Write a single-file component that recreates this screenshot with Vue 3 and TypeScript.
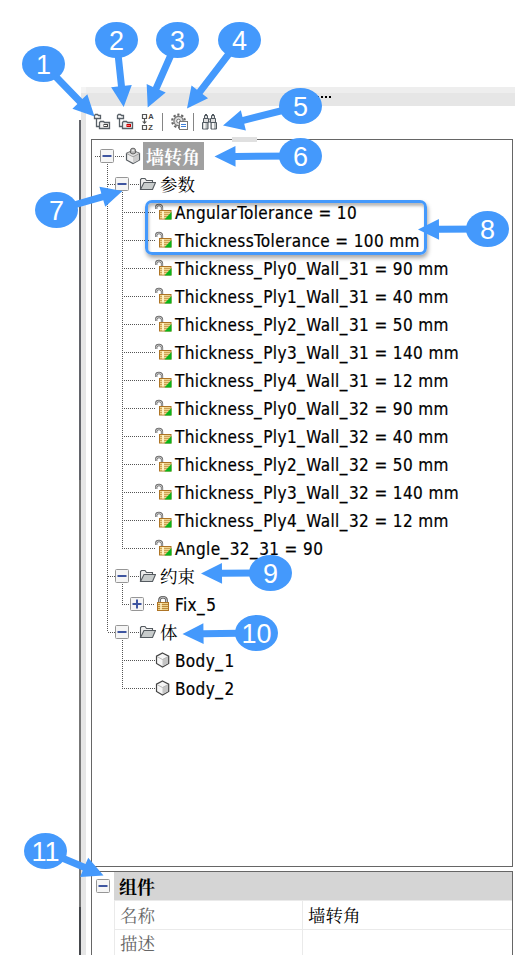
<script setup lang="ts">
type IconKind = 'component' | 'folder' | 'param' | 'lock' | 'body'

interface TreeRow {
  label: string
  depth: 0 | 1 | 2
  icon: IconKind
  box?: 'minus' | 'plus'
  cjk?: boolean
  selected?: boolean
  last?: boolean
  rootTrunk: boolean
}

const params: string[] = [
  'AngularTolerance = 10',
  'ThicknessTolerance = 100 mm',
  'Thickness_Ply0_Wall_31 = 90 mm',
  'Thickness_Ply1_Wall_31 = 40 mm',
  'Thickness_Ply2_Wall_31 = 50 mm',
  'Thickness_Ply3_Wall_31 = 140 mm',
  'Thickness_Ply4_Wall_31 = 12 mm',
  'Thickness_Ply0_Wall_32 = 90 mm',
  'Thickness_Ply1_Wall_32 = 40 mm',
  'Thickness_Ply2_Wall_32 = 50 mm',
  'Thickness_Ply3_Wall_32 = 140 mm',
  'Thickness_Ply4_Wall_32 = 12 mm',
  'Angle_32_31 = 90',
]

const rows: TreeRow[] = [
  { label: '墙转角', depth: 0, icon: 'component', box: 'minus', cjk: true, selected: true, rootTrunk: true },
  { label: '参数', depth: 1, icon: 'folder', box: 'minus', cjk: true, rootTrunk: true },
  ...params.map((label, i): TreeRow => ({
    label, depth: 2, icon: 'param', last: i === params.length - 1, rootTrunk: true,
  })),
  { label: '约束', depth: 1, icon: 'folder', box: 'minus', cjk: true, rootTrunk: true },
  { label: 'Fix_5', depth: 2, icon: 'lock', box: 'plus', last: true, rootTrunk: true },
  { label: '体', depth: 1, icon: 'folder', box: 'minus', cjk: true, last: true, rootTrunk: true },
  { label: 'Body_1', depth: 2, icon: 'body', rootTrunk: false },
  { label: 'Body_2', depth: 2, icon: 'body', last: true, rootTrunk: false },
]

// Splits a name so that its underscores can be spaced on their own.
const pieces = (label: string): string[] => label.split(/(_)/)

const guideWidth = (r: TreeRow): number => (r.depth === 2 ? 63 : 32 + r.depth * 15)
const boxX = (r: TreeRow): number => 8 + r.depth * 15

function guides(r: TreeRow): string {
  const w = guideWidth(r)
  if (r.depth === 0) return `M3 14.5H8M23 14.5H${w}M15.5 22V28`
  const parts: string[] = []
  if (r.rootTrunk) parts.push(r.depth === 1 && r.last ? 'M15.5 0V14' : 'M15.5 0V28')
  if (r.depth === 1) {
    parts.push(`M16 14.5H23M38 14.5H${w}M30.5 22V28`)
  } else {
    parts.push(r.last ? 'M30.5 0V15' : 'M30.5 0V28')
    parts.push(r.box ? `M32 14.5H38M53 14.5H${w}` : `M32 14.5H${w}`)
  }
  return parts.join('')
}

interface Callout { n: number; x: number; y: number; tx: number; ty: number }

const callouts: Callout[] = [
  { n: 1, x: 43.5, y: 64, tx: 94.5, ty: 116.5 },
  { n: 2, x: 116.5, y: 40, tx: 123.7, ty: 107 },
  { n: 3, x: 177.5, y: 40, tx: 147.7, ty: 107.5 },
  { n: 4, x: 239.5, y: 40, tx: 187, ty: 108.5 },
  { n: 5, x: 300.5, y: 106, tx: 223, ty: 125.5 },
  { n: 6, x: 300.5, y: 156, tx: 214.5, ty: 156.5 },
  { n: 7, x: 56.5, y: 210, tx: 122.5, ty: 191 },
  { n: 8, x: 487.5, y: 229, tx: 418, ty: 229.5 },
  { n: 9, x: 270.5, y: 573, tx: 201, ty: 573.5 },
  { n: 10, x: 256.5, y: 633, tx: 182.5, ty: 634 },
  { n: 11, x: 45.5, y: 851, tx: 103.5, ty: 875.5 },
]

function arrow(c: Callout): string {
  const dx = c.tx - c.x
  const dy = c.ty - c.y
  const len = Math.hypot(dx, dy)
  const ux = dx / len
  const uy = dy / len
  const at = (along: number, side: number): string =>
    `${(c.x + ux * along - uy * side).toFixed(2)},${(c.y + uy * along + ux * side).toFixed(2)}`
  const head = len - 21
  return [at(0, 3.5), at(head, 3.5), at(head, 10.4), at(len, 0), at(head, -10.4), at(head, -3.5), at(0, -3.5)].join(' ')
}
</script>

<template>
  <div class="page">
    <div class="dock">
      <div class="rail"><i class="rail-dark"></i><i class="rail-light"></i></div>
      <div class="panel">
        <div class="titlebar"><span class="grip"><i v-for="k in 6" :key="k"></i></span></div>
        <div class="toolbar">
          <svg class="tool" width="18" height="18" viewBox="0 0 18 18">
            <path d="M1.5 5.5V2.5L2.5 1.5H4.5L5.5 2.5H7.5V5.5ZM3.5 6V13.5H7" fill="none" stroke="#586067" stroke-width="1.3" />
            <path d="M6.5 15.5V9.5L7.5 8.5H10.5L11.5 9.5H16.5V15.5Z" fill="#f1f1f1" stroke="#586067" stroke-width="1.3" />
            <rect x="11" y="11.5" width="3.5" height="2" fill="#fff" stroke="#444" />
          </svg>
          <svg class="tool second" width="18" height="18" viewBox="0 0 18 18">
            <path d="M1.5 5.5V2.5L2.5 1.5H4.5L5.5 2.5H7.5V5.5ZM3.5 6V13.5H7" fill="none" stroke="#586067" stroke-width="1.3" />
            <path d="M6.5 15.5V9.5L7.5 8.5H10.5L11.5 9.5H16.5V15.5Z" fill="#f1f1f1" stroke="#586067" stroke-width="1.3" />
            <rect x="11" y="11.5" width="3.5" height="2" fill="#f66" stroke="#c00" />
          </svg>
          <svg class="tool sort" width="13" height="18" viewBox="0 0 13 18">
            <path d="M1.5 1.5h4v4h-4zM1.5 12.5h4v4h-4zM3.5 6v4" fill="none" stroke="#555" stroke-width="1.2" />
            <path d="M1 8.4H6L3.5 11Z" fill="#555" />
            <text x="7.3" y="6.3">A</text><text x="7.3" y="17">Z</text>
          </svg>
          <i class="sep"></i>
          <svg class="tool gear" width="17" height="18" viewBox="0 0 17 18">
            <circle cx="7.5" cy="8" r="6.3" fill="none" stroke="#666" stroke-width="2.2" stroke-dasharray="2.2 1.76" />
            <circle cx="7.5" cy="8" r="4.6" fill="#ddd" stroke="#777" stroke-width="1.2" />
            <circle cx="7.5" cy="8" r="1.8" fill="#fff" stroke="#777" />
            <rect x="8.5" y="8.5" width="8" height="8" fill="#fff" stroke="#777" />
            <path d="M10 11.5h5M10 13.5h5" stroke="#4080d8" />
          </svg>
          <i class="sep after-gear"></i>
          <svg class="tool bino" width="18" height="18" viewBox="0 0 18 18">
            <path d="M3.5 2.5h3v3h-3zM10.5 2.5h3v3h-3zM2.5 5.5h5v4h-5zM9.5 5.5h5v4h-5zM7.5 6h2v3h-2z" fill="#ddd" stroke="#505960" />
            <path d="M1.5 9.5h5.5v6.5h-5.5zM10 9.5h5.5v6.5h-5.5z" fill="#b5b9b9" stroke="#505960" />
            <path d="M3.5 10v5.5M12 10v5.5" stroke="#f8f8f8" stroke-width="2" />
            <path d="M4 1.5h2M11 1.5h2" stroke="#505960" />
          </svg>
        </div>

        <div class="tree">
          <div v-for="(r, i) in rows" :key="i" class="row">
            <svg :width="guideWidth(r)" height="28" class="guide">
              <path :d="guides(r)" class="dots" />
              <g v-if="r.box" :transform="`translate(${boxX(r)} 7)`">
                <rect x="0.5" y="0.5" width="13" height="13" rx="1" class="box" />
                <path :d="r.box === 'plus' ? 'M2.5 7H11.5M7 2.5V11.5' : 'M2.5 7H11.5'" class="sign" />
              </g>
            </svg>
            <svg class="icon" width="17" height="18" viewBox="0 0 17 18">
              <template v-if="r.icon === 'component'">
                <path d="M9 3.5L15.5 6.5V13L9 16.5L2.5 13V6.5Z" fill="#eee" stroke="#555b60" stroke-width="1.2" />
                <path d="M9 9.8L15 6.5V13L9 16.2Z" fill="#ccc" />
                <path d="M2.5 6.5L9 3.5L15.5 6.5L9 9.8Z" fill="#dedede" stroke="#888" stroke-width=".7" />
                <path d="M6.5 6V3.2Q6.5 1.2 9 1.2T11.5 3.2V6Q9 8 6.5 6Z" fill="#b4b4b4" stroke="#666" />
                <circle cx="9" cy="3.5" r="1" fill="#eee" />
              </template>
              <template v-else-if="r.icon === 'folder'">
                <path d="M1.5 14V4.5L2.5 3.5H6L7.5 5.5H13.5V7.5" fill="#eee" stroke="#555b60" stroke-width="1.1" />
                <path d="M1.5 14.5L5 7.5H16.5L13.5 14.5Z" fill="#c8cccc" stroke="#555b60" stroke-width="1.1" />
              </template>
              <template v-else-if="r.icon === 'param'">
                <path d="M1.2 6V4.2Q1.2 2 4 2T7 4.5V8" fill="none" stroke="#666" stroke-width="2.3" />
                <path d="M1.2 6V4.2Q1.2 2 4 2T7 4.5V8" fill="none" stroke="#ddd" stroke-width=".8" />
                <rect x="4.5" y="7.5" width="11.5" height="8.5" fill="#efd48f" stroke="#ae7425" />
                <path d="M5 9.5H15.5M5 11.5H15.5M5 13.5H15.5" stroke="#cda154" />
                <path d="M8 8V15.5" stroke="#fff0c2" stroke-width="2" />
                <path d="M16.5 9V16.5H9.5Z" fill="#08b51b" />
              </template>
              <template v-else-if="r.icon === 'lock'">
                <path d="M4.5 8V5Q4.5 2.2 8 2.2T11.5 5V8" fill="none" stroke="#555" stroke-width="2.6" />
                <path d="M4.5 8V5Q4.5 2.2 8 2.2T11.5 5V8" fill="none" stroke="#ddd" stroke-width=".8" />
                <rect x="2.5" y="7.5" width="11" height="8" fill="#efd48f" stroke="#ae7425" />
                <path d="M3 9.5H13M3 11.5H13M3 13.5H13" stroke="#bd8938" />
                <path d="M6 8V15" stroke="#fff0c2" stroke-width="1.6" />
              </template>
              <template v-else>
                <path d="M7.5 2L13.7 5.2V12.5L7.5 16L1.5 12.5V5.2Z" fill="#f6f6f6" stroke="#444" stroke-width="1.2" />
                <path d="M7.5 8.5L13 5.8V12.2L7.5 15.3Z" fill="#c4c4c4" />
                <path d="M2 5.6L7.5 8.5L13 5.6" fill="none" stroke="#aaa" stroke-width=".8" />
              </template>
            </svg>
            <span class="label" :class="{ cjk: r.cjk, selected: r.selected }"><span
              v-for="(p, k) in pieces(r.label)" :key="k" :class="{ under: p === '_' }">{{ p }}</span></span>
          </div>
        </div>

        <div class="props">
          <div class="gutter">
            <svg width="14" height="14">
              <rect x="0.5" y="0.5" width="13" height="13" rx="1" class="box" />
              <path d="M2.5 7H11.5" class="sign" />
            </svg>
          </div>
          <div class="grid">
            <div class="head">组件</div>
            <div class="prop"><span class="name">名称</span><span class="value">墙转角</span></div>
            <div class="prop clipped"><span class="name">描述</span><span class="value"></span></div>
          </div>
        </div>
      </div>
    </div>

    <i class="smudge"></i>
    <div class="highlight"></div>
    <svg class="callouts" width="525" height="955">
      <g v-for="c in callouts" :key="c.n">
        <polygon :points="arrow(c)" />
        <ellipse :cx="c.x" :cy="c.y" rx="21.5" ry="18" />
        <text :x="c.x" :y="c.y + 9.7">{{ c.n }}</text>
      </g>
    </svg>
  </div>
</template>

<style>
body {
  background: #fff;
}
</style>

<style scoped>
.page {
  position: relative;
  width: 525px;
  height: 955px;
  overflow: hidden;
  background: #fff;
  font-family: "DejaVu Sans Condensed", "DejaVu Sans", "Noto Sans CJK SC", sans-serif;
  font-stretch: condensed;
  color: #000;
}
.dock {
  display: flex;
  height: 955px;
  padding: 87px 10px 0 79px;
  box-sizing: border-box;
}
.rail {
  display: flex;
  flex: 0 0 7px;
}
.rail-dark {
  width: 2px;
  margin-top: 33px;
  background: linear-gradient(#62646a 0 360px, #777 360px 787px, #45474b 787px);
}
.rail-light {
  width: 5px;
  background: linear-gradient(#f4f4f4 0 6px, #e6e6e6 6px);
}
.panel {
  display: flex;
  flex-direction: column;
  flex: 1;
}
.titlebar {
  height: 19px;
  flex: none;
  display: flex;
  box-sizing: border-box;
  padding: 9px 0 0 223px;
  background: linear-gradient(#eee 0 6px, #e6e6e6 6px);
}
.grip {
  display: flex;
  gap: 2px;
}
.grip i {
  width: 2px;
  height: 2px;
  background: #000;
}
.toolbar {
  display: flex;
  flex: none;
  height: 33px;
  padding: 7px 0 0 7px;
  box-sizing: border-box;
}
.tool {
  flex: none;
}
.second {
  margin-left: 5px;
}
.sort {
  margin-left: 7px;
}
.sort text {
  font: bold 7.5px "Liberation Sans", sans-serif;
  fill: #444;
}
.sep {
  width: 1px;
  height: 18px;
  margin-left: 8px;
  background: #858585;
}
.gear {
  margin-left: 8px;
}
.after-gear {
  margin-left: 5px;
}
.bino {
  margin-left: 7px;
}
.tree {
  flex: none;
  width: 422px;
  height: 728px;
  margin-left: 5px;
  box-sizing: border-box;
  border: 1px solid #666;
  padding-top: 2px;
}
.row {
  display: flex;
  align-items: center;
  height: 28px;
}
.guide,
.icon {
  flex: none;
}
.dots {
  fill: none;
  stroke: #555;
  stroke-width: 1;
  stroke-dasharray: 1 1;
}
.box {
  fill: #f5f5f5;
  stroke: #969696;
}
.sign {
  fill: none;
  stroke: #3e55a0;
  stroke-width: 2;
}
.label {
  margin-left: 3px;
  padding-top: 2px;
  font-size: 17px;
  letter-spacing: 0.38px;
  line-height: 26px;
  white-space: pre;
  -webkit-text-stroke: 0.2px currentColor;
}
.under {
  letter-spacing: 1.6px;
}
.cjk {
  margin-left: 4px;
  padding-top: 0;
  font-family: "Noto Serif CJK SC", "Noto Sans CJK SC", sans-serif;
  font-size: 17.5px;
  font-weight: 400;
  letter-spacing: 0;
  -webkit-text-stroke: 0;
}
.selected {
  height: 28px;
  width: 61px;
  margin-left: 2px;
  padding-left: 3px;
  box-sizing: border-box;
  background: #a0a0a0;
  color: #fff;
  font-weight: 700;
  font-size: 18px;
  line-height: 28px;
}
.props {
  flex: none;
  display: flex;
  width: 422px;
  height: 84px;
  margin: 4px 0 0 5px;
  box-sizing: border-box;
  border: 1px solid #666;
  border-bottom: 0;
  font-family: "Noto Serif CJK SC", "Noto Sans CJK SC", sans-serif;
}
.gutter {
  width: 22px;
  padding: 7px 0 0 4px;
  box-sizing: border-box;
}
.gutter svg {
  display: block;
}
.grid {
  flex: 1;
}
.head {
  height: 28px;
  padding-left: 5px;
  background: #d5d5d5;
  font-size: 18px;
  font-weight: 700;
  line-height: 28px;
}
.prop {
  display: flex;
  height: 29px;
  box-sizing: border-box;
  border-top: 1px solid #eaeaea;
  font-size: 17.5px;
  line-height: 28px;
}
.clipped {
  height: 26px;
  line-height: 26px;
}
.name {
  width: 189px;
  padding-left: 5px;
  box-sizing: border-box;
  border-left: 1px solid #eaeaea;
  border-right: 1px solid #eaeaea;
  color: #666;
}
.value {
  padding-left: 5px;
}
.smudge {
  position: absolute;
  left: 232px;
  top: 137px;
  width: 25px;
  height: 5px;
  background: #e0e0e0;
}
.highlight {
  position: absolute;
  left: 145px;
  top: 200px;
  width: 282px;
  height: 55px;
  box-sizing: border-box;
  border: 3px solid #4499fc;
  border-radius: 7px;
  box-shadow: 1px 3px 4px rgba(0, 0, 0, 0.35), inset 1px 3px 3px rgba(0, 0, 0, 0.28);
}
.callouts {
  position: absolute;
  left: 0;
  top: 0;
  fill: #4499fc;
}
.callouts text {
  fill: #fff;
  font-family: "Liberation Sans", sans-serif;
  font-size: 27px;
  text-anchor: middle;
}
</style>
